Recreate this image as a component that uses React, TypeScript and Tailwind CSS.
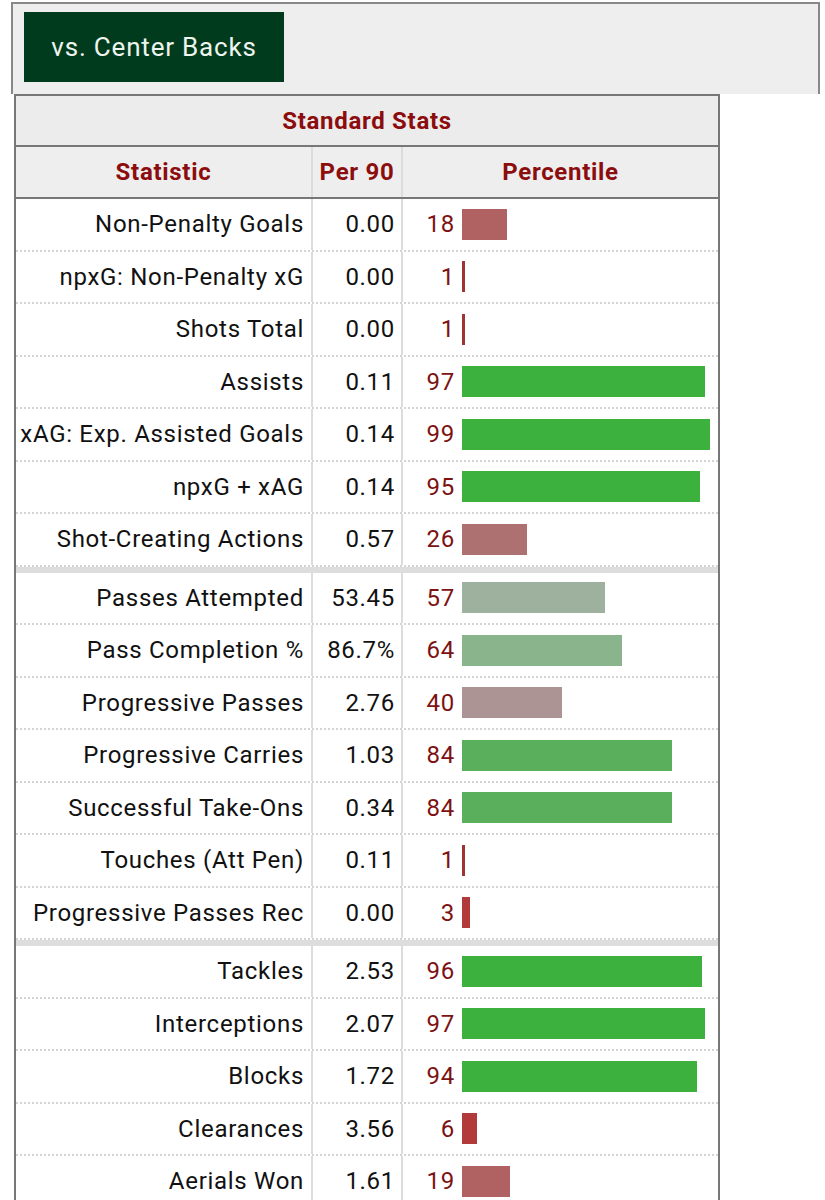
type Row = { label: string; per90: string; pct: number; color: string };

const groups: Row[][] = [
  [
    { label: "Non-Penalty Goals", per90: "0.00", pct: 18, color: "#b06262" },
    { label: "npxG: Non-Penalty xG", per90: "0.00", pct: 1, color: "#9e3434" },
    { label: "Shots Total", per90: "0.00", pct: 1, color: "#9e3434" },
    { label: "Assists", per90: "0.11", pct: 97, color: "#3cb13e" },
    { label: "xAG: Exp. Assisted Goals", per90: "0.14", pct: 99, color: "#3cb13e" },
    { label: "npxG + xAG", per90: "0.14", pct: 95, color: "#3cb13e" },
    { label: "Shot-Creating Actions", per90: "0.57", pct: 26, color: "#ad7171" },
  ],
  [
    { label: "Passes Attempted", per90: "53.45", pct: 57, color: "#9eb09e" },
    { label: "Pass Completion %", per90: "86.7%", pct: 64, color: "#8ab48b" },
    { label: "Progressive Passes", per90: "2.76", pct: 40, color: "#ad9494" },
    { label: "Progressive Carries", per90: "1.03", pct: 84, color: "#5aaf5d" },
    { label: "Successful Take-Ons", per90: "0.34", pct: 84, color: "#5aaf5d" },
    { label: "Touches (Att Pen)", per90: "0.11", pct: 1, color: "#9e3434" },
    { label: "Progressive Passes Rec", per90: "0.00", pct: 3, color: "#b33a3a" },
  ],
  [
    { label: "Tackles", per90: "2.53", pct: 96, color: "#3cb13e" },
    { label: "Interceptions", per90: "2.07", pct: 97, color: "#3cb13e" },
    { label: "Blocks", per90: "1.72", pct: 94, color: "#3cb13e" },
    { label: "Clearances", per90: "3.56", pct: 6, color: "#b33a3a" },
    { label: "Aerials Won", per90: "1.61", pct: 19, color: "#b06262" },
  ],
];

const StatRow = ({ row }: { row: Row }) => (
  <div className="flex h-[52.5px] border-b-2 border-dotted border-[#d4d4d4] text-[24px]">
    <div className="flex w-[297px] items-center justify-end border-r-2 border-[#dcdcdc] pr-[7px] text-[#111]">
      {row.label}
    </div>
    <div className="flex w-[90px] items-center justify-end border-r-2 border-[#dcdcdc] pr-[6px] text-[#111]">
      {row.per90}
    </div>
    <div className="flex flex-1 items-center">
      <span className="w-[52px] text-right text-[#7d1212]">{row.pct}</span>
      <div
        className="ml-[7px] h-[31px]"
        style={{ width: Math.max(2, row.pct * 2.5), backgroundColor: row.color }}
      />
    </div>
  </div>
);

const App = () => {
  return (
    <div className="min-h-[1200px] bg-white pl-[11px] pt-[2px] font-['Roboto',sans-serif] tracking-[0.7px]">
      <div className="h-[92px] w-[809px] border-x-2 border-t-2 border-[#888] bg-[#eeeeee] pl-[11px] pt-[8px]">
        <button className="flex h-[70px] w-[260px] items-center justify-center bg-[#013b1d] text-[26px] tracking-[0.8px] text-[#eef4ee]">
          vs. Center Backs
        </button>
      </div>
      <div className="ml-[3px] w-[706px] border-x-2 border-t-2 border-[#777]">
        <div className="flex h-[51px] items-center justify-center border-b-2 border-[#777] bg-[#ececec] text-[24px] font-bold text-[#8b0d0d]">
          Standard Stats
        </div>
        <div className="flex h-[52px] border-b-2 border-[#777] bg-[#eeeeee] text-[24px] font-bold text-[#8b0d0d]">
          <div className="flex w-[297px] items-center justify-center border-r-2 border-[#dcdcdc]">Statistic</div>
          <div className="flex w-[90px] items-center justify-center border-r-2 border-[#dcdcdc]">Per 90</div>
          <div className="flex flex-1 items-center justify-center">Percentile</div>
        </div>
        {groups.map((g, i) => (
          <div key={i}>
            {i > 0 && <div className="h-[6px] bg-[#dddddd]" />}
            {g.map((r) => (
              <StatRow key={r.label} row={r} />
            ))}
          </div>
        ))}
      </div>
    </div>
  );
};

export default App;
